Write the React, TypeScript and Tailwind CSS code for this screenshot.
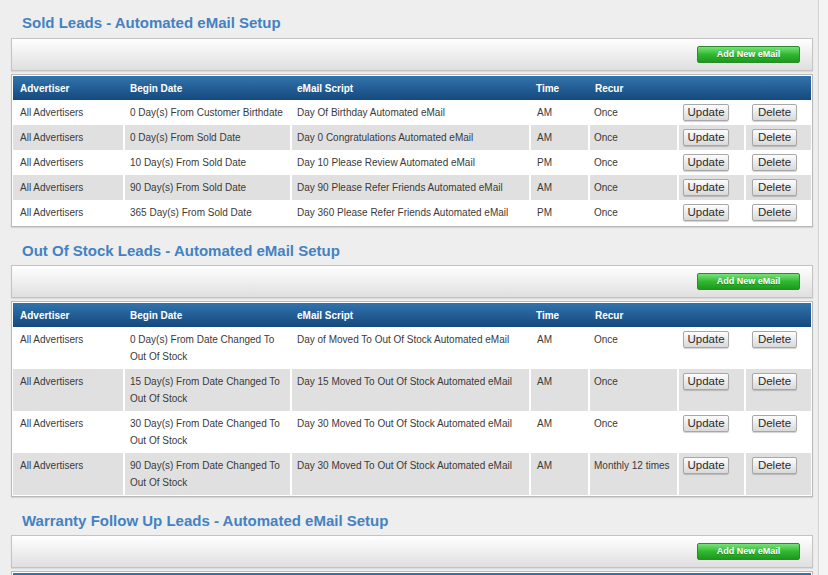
import React from "react";

type Row = {
  advertiser: string;
  begin: string[];
  script: string;
  time: string;
  recur: string;
};

const COLS = "grid grid-cols-[110px_167px_239px_59px_89px_67px_67px]";

const soldRows: Row[] = [
  { advertiser: "All Advertisers", begin: ["0 Day(s) From Customer Birthdate"], script: "Day Of Birthday Automated eMail", time: "AM", recur: "Once" },
  { advertiser: "All Advertisers", begin: ["0 Day(s) From Sold Date"], script: "Day 0 Congratulations Automated eMail", time: "AM", recur: "Once" },
  { advertiser: "All Advertisers", begin: ["10 Day(s) From Sold Date"], script: "Day 10 Please Review Automated eMail", time: "PM", recur: "Once" },
  { advertiser: "All Advertisers", begin: ["90 Day(s) From Sold Date"], script: "Day 90 Please Refer Friends Automated eMail", time: "AM", recur: "Once" },
  { advertiser: "All Advertisers", begin: ["365 Day(s) From Sold Date"], script: "Day 360 Please Refer Friends Automated eMail", time: "PM", recur: "Once" },
];

const stockRows: Row[] = [
  { advertiser: "All Advertisers", begin: ["0 Day(s) From Date Changed To", "Out Of Stock"], script: "Day of Moved To Out Of Stock Automated eMail", time: "AM", recur: "Once" },
  { advertiser: "All Advertisers", begin: ["15 Day(s) From Date Changed To", "Out Of Stock"], script: "Day 15 Moved To Out Of Stock Automated eMail", time: "AM", recur: "Once" },
  { advertiser: "All Advertisers", begin: ["30 Day(s) From Date Changed To", "Out Of Stock"], script: "Day 30 Moved To Out Of Stock Automated eMail", time: "AM", recur: "Once" },
  { advertiser: "All Advertisers", begin: ["90 Day(s) From Date Changed To", "Out Of Stock"], script: "Day 30 Moved To Out Of Stock Automated eMail", time: "AM", recur: "Monthly 12 times" },
];

const warrantyRows: Row[] = [
  { advertiser: "All Advertisers", begin: ["30 Day(s) From Sold Date"], script: "Day 30 Warranty Follow Up Automated eMail", time: "AM", recur: "Once" },
];

function SmallButton({ label, width }: { label: string; width: string }) {
  return (
    <button
      className={`flex h-[17px] ${width} items-center justify-center rounded-[2px] border border-[#a7a7a7] bg-linear-to-b from-[#fdfdfd] to-[#d9d9d9] text-[11.5px] leading-none text-[#2b2b2b] shadow-[0_1px_1px_rgba(0,0,0,0.18)]`}
    >
      {label}
    </button>
  );
}

function Section({ title, rows, first }: { title: string; rows: Row[]; first?: boolean }) {
  return (
    <div className={first ? "pt-[13px]" : "pt-[14px]"}>
      <h2
        className={`${first ? "mb-[5px]" : "mb-[4px]"} h-[20px] pl-[11px] text-[15px] leading-[20px] font-bold text-[#4382c1]`}
      >
        {title}
      </h2>

      <div className="flex h-[33px] items-center justify-end border border-[#c3c3c3] bg-linear-to-b from-white to-[#dfdfdf] pr-[12px] shadow-[0_1px_1px_rgba(0,0,0,0.08)]">
        <button className="flex h-[17px] w-[103px] items-center justify-center rounded-[2px] border border-[#2b8c2b] bg-linear-to-b from-[#76e276] via-[#30b830] to-[#1c991c] text-[9px] font-bold text-white [text-shadow:0_1px_0_rgba(0,0,0,0.25)]">
          Add New eMail
        </button>
      </div>

      <div className="mt-[3px] border border-[#b9b9b9] bg-white p-px shadow-[0_1px_1px_rgba(0,0,0,0.1)]">
        <div className={`${COLS} h-[24px] bg-linear-to-b from-[#3274ae] to-[#15497d] text-[10px] font-bold text-white`}>
          {["Advertiser", "Begin Date", "eMail Script", "Time", "Recur", "", ""].map((h, i) => (
            <div key={i} className="flex items-center px-[7px]">
              {h}
            </div>
          ))}
        </div>

        {rows.map((r, idx) => (
          <div
            key={idx}
            className={`${COLS} text-[10px] leading-[17px] text-[#3a3a3a] ${idx % 2 === 1 ? "bg-[#e0e0e0]" : "bg-white"}`}
          >
            <div className="px-[7px] py-[4px] whitespace-nowrap">{r.advertiser}</div>
            <div className="border-l-2 border-white py-[4px] pr-[4px] pl-[5px] whitespace-nowrap">
              {r.begin.map((line, i) => (
                <div key={i}>{line}</div>
              ))}
            </div>
            <div className="border-l-2 border-white py-[4px] pl-[5px] whitespace-nowrap">{r.script}</div>
            <div className="border-l-2 border-white py-[4px] pl-[6px] whitespace-nowrap">{r.time}</div>
            <div className="border-l-2 border-white py-[4px] pl-[4px] whitespace-nowrap">{r.recur}</div>
            <div className="border-l-2 border-white pt-[4px] pl-[4px]">
              <SmallButton label="Update" width="w-[46px]" />
            </div>
            <div className="border-l-2 border-white pt-[4px] pl-[6px]">
              <SmallButton label="Delete" width="w-[45px]" />
            </div>
          </div>
        ))}
      </div>
    </div>
  );
}

export default function App() {
  return (
    <div className="min-h-[575px] bg-[#f4f4f4] font-['Liberation_Sans',Arial,sans-serif]">
      <div className="min-h-[575px] w-[819px] border-r border-[#d3d3d3] bg-[#eeeeee] pr-[5px] pl-[11px]">
        <div className="w-[802px] pb-[20px]">
          <Section first title="Sold Leads - Automated eMail Setup" rows={soldRows} />
          <Section title="Out Of Stock Leads - Automated eMail Setup" rows={stockRows} />
          <Section title="Warranty Follow Up Leads - Automated eMail Setup" rows={warrantyRows} />
        </div>
      </div>
    </div>
  );
}
